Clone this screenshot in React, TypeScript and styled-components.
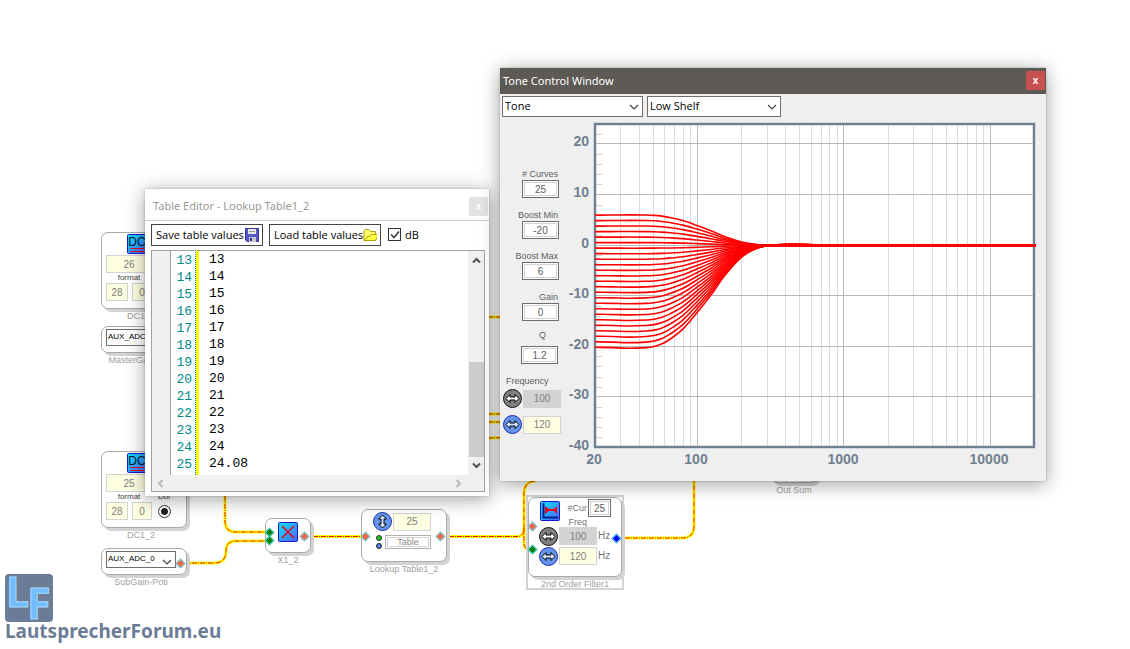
import React from "react";
import styled, { createGlobalStyle } from "styled-components";

const GlobalStyle = createGlobalStyle`
  * { box-sizing: border-box; }
  body { margin: 0; background: #fff; font-family: "Liberation Sans", Arial, sans-serif; }
  button, input, select, textarea { font: inherit; margin: 0; border-radius: 0; }
`;

const uiFont = `"Open Sans", "Noto Sans", sans-serif`;

/* ---------- canvas ---------- */

const Canvas = styled.main`
  position: relative;
  min-height: 100vh;
  overflow: hidden;
  background: #fff;
`;

const WireLayer = styled.svg`
  position: absolute;
  inset: 0;
  width: 100%;
  height: 100%;
`;

const Node = styled.section<{ $x: number; $y: number; $w: number }>`
  position: absolute;
  left: ${(p) => p.$x}px;
  top: ${(p) => p.$y}px;
  width: ${(p) => p.$w}px;
  font-size: 9px;
  color: #777;
`;

const NodeBody = styled.div<{ $h: number }>`
  position: relative;
  height: ${(p) => p.$h}px;
  border: 1px solid #a9a9a9;
  border-radius: 7px;
  background: #fff;
  box-shadow: 3px 3px 0 #d3d3d3;
`;

const NodeName = styled.h3<{ $source?: boolean }>`
  margin: 2px -20px 0;
  padding-right: ${(p) => (p.$source ? 6 : 0)}px;
  font-size: 9px;
  font-weight: 400;
  line-height: 11px;
  text-align: center;
  white-space: nowrap;
  color: #a0a0a0;
`;

const Selection = styled.div`
  position: absolute;
  left: 526px;
  top: 495px;
  width: 98px;
  height: 95px;
  border: 2px solid #d3d3d3;
`;

const Port = styled.i<{ $x: number; $y: number; $c: string }>`
  position: absolute;
  left: ${(p) => p.$x}px;
  top: ${(p) => p.$y}px;
  width: 7px;
  height: 7px;
  transform: rotate(45deg);
  background: ${(p) => p.$c};
  border: 1px solid #58d8e0;
`;

const Field = styled.input<{ $w: number; $tone?: "grey" | "cream" }>`
  display: block;
  width: ${(p) => p.$w}px;
  height: 18px;
  padding: 0;
  border: 1px solid #d3d3d3;
  background: ${(p) => (p.$tone === "grey" ? "#d3d3d3" : "#ffffe1")};
  color: #808080;
  font-size: 10px;
  text-align: center;
`;

const FramedField = styled.input<{ $w: number }>`
  display: block;
  width: ${(p) => p.$w}px;
  height: 18px;
  padding: 0;
  border: 1px solid #6e6e6e;
  background: #fff;
  box-shadow: inset 0 0 0 1px #fff, inset 0 0 0 2px #d3d3d3;
  color: #606060;
  font-size: 10px;
  text-align: center;
`;

const Row = styled.div<{ $gap?: number }>`
  display: flex;
  align-items: center;
  gap: ${(p) => p.$gap ?? 0}px;
`;

/* ---------- DC source ---------- */

const DcGrid = styled.div`
  display: grid;
  grid-template-columns: 22px 20px 16px;
  grid-template-rows: 21px 18px 10px 18px;
  column-gap: 4px;
  padding: 1px 0 0 4px;
  align-items: center;
`;
const IconCell = styled.div`
  grid-column: 1 / 3;
  height: 21px;
  padding-left: 21px;
`;
const WideCell = styled.div`
  grid-column: 1 / 4;
`;
const Caption = styled.span<{ $span?: number }>`
  grid-column: span ${(p) => p.$span ?? 1};
  font-size: 8px;
  line-height: 10px;
  text-align: center;
  color: #444;
`;
const Radio = styled.input`
  appearance: none;
  width: 13px;
  height: 13px;
  justify-self: center;
  border: 1px solid #333;
  border-radius: 50% !important;
  background: radial-gradient(circle, #222 0 3px, #fff 4px);
`;

function DcNode({ x, y, value, name }: { x: number; y: number; value: string; name: string }) {
  return (
    <Node $x={x} $y={y} $w={86}>
      <NodeBody $h={77}>
        <DcGrid>
          <IconCell>
            <svg width="20" height="20" aria-hidden="true">
              <TileGradient id={`dc-${name}`} />
              <rect x=".5" y=".5" width="19" height="19" rx="1" fill={`url(#dc-${name})`} stroke="#1818c8" />
              <text x="10" y="12" fontSize="12" textAnchor="middle" fill="#001030" fontFamily="Liberation Sans">DC</text>
              <path d="M3 14.500H17M3 17.500H17" stroke="#f00018" />
            </svg>
          </IconCell>
          <WideCell><Field $w={46} defaultValue={value} aria-label={`${name} value`} /></WideCell>
          <Caption $span={2}>format</Caption>
          <Caption>Dbl</Caption>
          <Field $w={22} defaultValue="28" aria-label={`${name} integer bits`} />
          <Field $w={20} defaultValue="0" aria-label={`${name} fraction bits`} />
          <Radio type="radio" defaultChecked aria-label={`${name} double`} />
        </DcGrid>
      </NodeBody>
      <NodeName $source>{name}</NodeName>
    </Node>
  );
}

function TileGradient({ id }: { id: string }) {
  return (
    <defs>
      <linearGradient id={id} x1="0" x2="1" y1="0" y2="1">
        <stop offset="0" stopColor="#10e8ff" />
        <stop offset=".5" stopColor="#28a8ff" />
        <stop offset="1" stopColor="#5060f8" />
      </linearGradient>
    </defs>
  );
}

/* ---------- drop-downs ---------- */

const SelectBox = styled.span<{ $w: number; $h: number; $small?: boolean }>`
  position: relative;
  display: block;
  width: ${(p) => p.$w}px;
  height: ${(p) => p.$h}px;
  svg { position: absolute; right: 4px; bottom: ${(p) => (p.$small ? 2 : 6)}px; pointer-events: none; }
`;
const SelectControl = styled.select<{ $small?: boolean }>`
  appearance: none;
  width: 100%;
  height: 100%;
  padding: ${(p) => (p.$small ? "0 0 3px 1px" : "0 0 2px 2px")};
  border: 1px solid #6e6e6e;
  background: #fff;
  color: #000;
  font-family: ${(p) => (p.$small ? `"Liberation Sans", sans-serif` : uiFont)};
  font-size: ${(p) => (p.$small ? 8 : 11)}px;
`;

function DropDown({ w, h, value, label, small }: { w: number; h: number; value: string; label: string; small?: boolean }) {
  return (
    <SelectBox $w={w} $h={h} $small={small}>
      <SelectControl $small={small} aria-label={label} defaultValue={value}>
        <option>{value}</option>
      </SelectControl>
      <svg width="10" height="8" aria-hidden="true"><path d="M1 2L5 6L9 2" fill="none" stroke="#444" strokeWidth="1.200" /></svg>
    </SelectBox>
  );
}

const PotiInner = styled.div`
  padding: 2px 4px;
`;

function PotiNode({ x, y, name }: { x: number; y: number; name: string }) {
  return (
    <Node $x={x} $y={y} $w={86}>
      <NodeBody $h={27}>
        <PotiInner><DropDown w={70} h={17} value="AUX_ADC_0" label={name} small /></PotiInner>
        <Port $x={75} $y={11} $c="#ff6347" />
      </NodeBody>
      <NodeName $source>{name}</NodeName>
    </Node>
  );
}

/* ---------- round arrow buttons ---------- */

const Round = styled.button<{ $blue?: boolean }>`
  display: block;
  flex: none;
  width: 19px;
  height: 19px;
  padding: 0;
  border: 1px solid ${(p) => (p.$blue ? "#1c2ca8" : "#111")};
  border-radius: 50%;
  background: ${(p) => (p.$blue ? "#6495ed" : "#808080")};
  svg { display: block; }
`;

function ArrowButton({ blue, vertical, label }: { blue?: boolean; vertical?: boolean; label: string }) {
  return (
    <Round $blue={blue} type="button" aria-label={label}>
      <svg width="17" height="17" aria-hidden="true">
        <path
          d="M2 8.500L6 4.500V7H11V4.500L15 8.500L11 12.500V10H6V12.500Z"
          fill={blue ? "#d8e4ff" : "#fff"}
          stroke="#000"
          transform={vertical ? "rotate(90 8.500 8.500)" : undefined}
        />
      </svg>
    </Round>
  );
}

/* ---------- other nodes ---------- */

const MultiplyInner = styled.div`
  padding: 3px 0 0 12px;
`;
const LookupInner = styled.div`
  display: flex;
  flex-direction: column;
  gap: 4px;
  padding: 2px 0 0 11px;
`;
const Lamps = styled.div`
  display: flex;
  flex-direction: column;
  align-items: flex-start;
  gap: 2px;
  width: 12px;
  padding-left: 3px;
`;
const Lamp = styled.i<{ $c: string }>`
  width: 6px;
  height: 6px;
  border: 1px solid #203020;
  border-radius: 50%;
  background: ${(p) => p.$c};
`;
const TableButton = styled.button`
  width: 46px;
  height: 14px;
  padding: 0;
  border: 1px solid #b0b0b0;
  background: #fff;
  box-shadow: inset 0 0 0 1px #fff, inset 0 0 0 2px #d3d3d3;
  color: #888;
  font-size: 9px;
  line-height: 12px;
`;
const FilterGrid = styled.div`
  display: grid;
  grid-template-columns: 20px 38px 14px;
  grid-template-rows: 28px 20px 19px;
  padding: 1px 0 0 10px;
  align-items: start;
`;
const FilterHead = styled.div`
  grid-column: 1 / 4;
  display: grid;
  grid-template-columns: 21px 26px 23px;
  grid-template-rows: 18px 10px;
  column-gap: 1px;
  align-items: center;
  text-align: right;
`;
const FreqText = styled.span`
  grid-column: 2;
  font-size: 9px;
  line-height: 10px;
`;
const TileSlot = styled.div`
  grid-row: 1 / 3;
  align-self: start;
  padding: 2px 0 0 1px;
  svg { display: block; }
`;
const Unit = styled.span`
  padding-left: 1px;
  font-size: 10px;
  line-height: 18px;
`;

/* ---------- wires ---------- */

const wires = [
  "M225 480V521Q225 532 236 532H270",
  "M184 563H214Q226 563 226 551Q226 541 236 541H270",
  "M305 536.500H366",
  "M441 536.500H518Q524 536 524 528V494Q524 481 536 481",
  "M524 528V544Q524 550 533 550",
  "M617 538H682Q694 538 694 526V470",
  "M480 317H505",
  "M480 414H505",
  "M480 422H505",
  "M480 439Q496 437 505 438",
];

/* ---------- floating windows ---------- */

const FloatingWindow = styled.section<{ $x: number; $y: number; $w: number; $h: number; $bg: string }>`
  position: absolute;
  left: ${(p) => p.$x}px;
  top: ${(p) => p.$y}px;
  width: ${(p) => p.$w}px;
  height: ${(p) => p.$h}px;
  display: flex;
  flex-direction: column;
  background: ${(p) => p.$bg};
  box-shadow: 0 3px 18px rgba(0, 0, 0, 0.38), 0 0 2px rgba(0, 0, 0, 0.25);
`;

const TitleBar = styled.header<{ $active?: boolean }>`
  flex: none;
  display: flex;
  align-items: center;
  justify-content: space-between;
  height: ${(p) => (p.$active ? 26 : 32)}px;
  padding: ${(p) => (p.$active ? "0 1px 1px 3px" : "3px 1px 0 8px")};
  border-bottom: ${(p) => (p.$active ? "0" : "1px solid #d0d0d0")};
  background: ${(p) => (p.$active ? "#5d5955" : "#fff")};
  color: ${(p) => (p.$active ? "#fff" : "#999")};
`;
const Title = styled.h2`
  margin: 0;
  font-family: "Noto Sans", "Open Sans", sans-serif;
  font-size: 11px;
  font-weight: 400;
  line-height: 18px;
`;
const CloseButton = styled.button<{ $active?: boolean }>`
  width: 19px;
  height: 19px;
  padding: 0;
  border: 0;
  background: ${(p) => (p.$active ? "#c75050" : "#e2e2e2")};
  color: #fff;
  font-size: 10px;
  font-weight: 700;
  line-height: 17px;
`;

/* ---------- table editor ---------- */

const EditorTools = styled.div`
  flex: none;
  display: flex;
  align-items: center;
  gap: 6px;
  height: 29px;
  padding: 0 6px 2px;
`;
const ToolButton = styled.button`
  display: flex;
  align-items: center;
  justify-content: space-between;
  width: 112px;
  height: 22px;
  padding: 0 3px 0 4px;
  border: 1px solid #444;
  background: #fff;
  color: #000;
  font-family: ${uiFont};
  font-size: 11px;
  white-space: nowrap;
`;
const CheckLabel = styled.label`
  display: flex;
  align-items: center;
  gap: 4px;
  position: relative;
  padding-left: 1px;
  font-family: ${uiFont};
  font-size: 11px;
  color: #000;
  svg { position: absolute; left: 3px; pointer-events: none; }
`;
const CheckInput = styled.input`
  appearance: none;
  width: 13px;
  height: 13px;
  border: 1px solid #333;
  background: #fff;
`;
const EditorFrame = styled.div`
  flex: 1;
  display: grid;
  grid-template-columns: 19px 28px 1fr 16px;
  grid-template-rows: 1fr 16px;
  margin: 0 4px 4px 6px;
  border: 1px solid #a0a0a0;
  min-height: 0;
`;
const Gutter = styled.div`
  background: #f0f0f0;
  border-right: 1px solid #a0a0a0;
`;
const LineNumbers = styled.ol`
  margin: 0;
  padding: 1px 4px 0 0;
  list-style: none;
  overflow: hidden;
  border-right: 3px solid #ff0;
  background: linear-gradient(#008080 50%, transparent 50%) right / 1px 2px repeat-y;
  color: #008b8b;
  font-family: "Liberation Mono", monospace;
  font-size: 13px;
  line-height: 17px;
  text-align: right;
`;
const Values = styled.textarea`
  width: 100%;
  height: 100%;
  padding: 0 0 0 10px;
  border: 0;
  outline: 0;
  resize: none;
  overflow: hidden;
  background: #fff;
  color: #000;
  font-family: "Liberation Mono", monospace !important;
  font-size: 13px !important;
  line-height: 17px !important;
`;
const ScrollV = styled.div`
  display: flex;
  flex-direction: column;
  align-items: center;
  background: #f0f0f0;
  padding: 5px 0 5px;
  svg { display: block; }
`;
const Thumb = styled.div`
  width: 15px;
  height: 95px;
  margin: auto 0 4px;
  background: #cdcdcd;
`;
const ScrollH = styled.div`
  grid-column: 1 / 5;
  display: flex;
  align-items: center;
  justify-content: space-between;
  padding: 0 21px 0 4px;
  background: #f0f0f0;
`;

const lines = Array.from({ length: 13 }, (_, i) => i + 13);
const tableText = lines.map((n) => (n === 25 ? "24.08" : String(n))).join("\n");

function Chevron({ d, color }: { d: string; color: string }) {
  return <svg width="9" height="9" aria-hidden="true"><path d={d} fill="none" stroke={color} strokeWidth="2" /></svg>;
}

function TableEditor() {
  return (
    <FloatingWindow $x={145} $y={189} $w={344} $h={307} $bg="#fff">
      <TitleBar>
        <Title>Table Editor - Lookup Table1_2</Title>
        <CloseButton aria-label="Close table editor">x</CloseButton>
      </TitleBar>
      <EditorTools>
        <ToolButton type="button">
          Save table values
          <svg width="14" height="14" aria-hidden="true">
            <path d="M.5.500H13.500V13.500H2L.5 12Z" fill="#5757c8" stroke="#38389a" />
            <path d="M3 1H11V6H3Z" fill="#e8e8e8" />
            <path d="M4 3.500H10" stroke="#999" />
            <path d="M4 9H11V14H4Z" fill="#c8c8d0" />
            <path d="M5 10H7V13H5Z" fill="#33338a" />
          </svg>
        </ToolButton>
        <ToolButton type="button">
          Load table values
          <svg width="16" height="14" aria-hidden="true">
            <path d="M1 12.500V3L2.500 1.500H6L7.500 3.500H12.500V6" fill="#ffff70" stroke="#aaa000" />
            <path d="M1 12.500L5 8L6.500 8.500L8 6.500H15.500L12.500 12.500Z" fill="#ffff40" stroke="#b0a000" />
          </svg>
        </ToolButton>
        <CheckLabel>
          <CheckInput type="checkbox" defaultChecked />
          <svg width="10" height="9" aria-hidden="true"><path d="M1 4.500L4 7.500L9 1.500" fill="none" stroke="#222" strokeWidth="1.300" /></svg>
          dB
        </CheckLabel>
      </EditorTools>
      <EditorFrame>
        <Gutter />
        <LineNumbers>{lines.map((n) => <li key={n}>{n}</li>)}</LineNumbers>
        <Values aria-label="Table values" defaultValue={tableText} spellCheck={false} />
        <ScrollV>
          <Chevron d="M1 6.500L4.500 3L8 6.500" color="#505050" />
          <Thumb />
          <Chevron d="M1 2.500L4.500 6L8 2.500" color="#505050" />
        </ScrollV>
        <ScrollH>
          <Chevron d="M6.500 1L3 4.500L6.500 8" color="#b8b8b8" />
          <Chevron d="M2.500 1L6 4.500L2.500 8" color="#b8b8b8" />
        </ScrollH>
      </EditorFrame>
    </FloatingWindow>
  );
}

/* ---------- tone control ---------- */

const ToneTools = styled.div`
  flex: none;
  display: flex;
  gap: 4px;
  padding: 2px 2px 1px;
`;
const ToneBody = styled.div`
  flex: 1;
  display: flex;
  min-height: 0;
`;
const Params = styled.div`
  flex: none;
  width: 66px;
  padding: 50px 0 0 3px;
`;
const ParamList = styled.div`
  display: flex;
  flex-direction: column;
  gap: 11px;
  padding-right: 7px;
`;
const Param = styled.label<{ $centered?: boolean }>`
  display: flex;
  flex-direction: column;
  align-items: flex-end;
  gap: ${(p) => (p.$centered ? 5 : 0)}px;
  margin-top: ${(p) => (p.$centered ? 8 : 0)}px;
  padding-right: ${(p) => (p.$centered ? 8 : 0)}px;
  color: #606060;
  font-size: 9px;
  line-height: 12px;
  span { padding-right: ${(p) => (p.$centered ? 12 : 1)}px; white-space: nowrap; }
`;
const FrequencyTitle = styled.h3`
  margin: 11px 0 2px 3px;
  color: #606060;
  font-size: 9px;
  font-weight: 400;
  line-height: 12px;
`;
const FrequencyRows = styled.div`
  display: flex;
  flex-direction: column;
  gap: 7px;
`;
const Chart = styled.svg`
  flex: none;
  display: block;
  font: bold 14px "Liberation Sans", Arial, sans-serif;
  fill: #708090;
`;

const left = 29;
const right = 468;
const top = 6;
const bottom = 329;
const freqX = (f: number) => left + Math.log10(f / 20) * 146.5;
const dbY = (db: number) => 127.5 - db * 5.06;

const minorFreqs = [30, 40, 50, 60, 70, 80, 90].concat(
  ...[100, 1000].map((d) => [2, 3, 4, 5, 6, 7, 8, 9].map((m) => m * d)),
);
const minorDbs = Array.from({ length: 31 }, (_, i) => 22 - i * 2).filter((d) => d % 10 !== 0);

/* share of the shelf gain left at each x position of the plot */
const response: [number, number][] = [
  [29, 1], [46, 1.004], [64, 1.01], [80, 1.004], [88, 0.993], [96, 0.967], [104, 0.922], [117, 0.82], [131, 0.66],
  [145, 0.487], [158, 0.305], [175, 0.12], [187, 0.045], [201, 0.002], [224, -0.013], [260, -0.004], [300, 0], [470, 0],
];

function curve(gain: number) {
  const p = response.map(([x, s]) => [x, dbY(gain * s)]);
  const slope = (i: number) => {
    const a = p[Math.max(0, i - 1)];
    const b = p[Math.min(p.length - 1, i + 1)];
    return (b[1] - a[1]) / (b[0] - a[0]);
  };
  let d = `M${p[0][0]} ${p[0][1]}`;
  for (let i = 1; i < p.length; i++) {
    const dx = (p[i][0] - p[i - 1][0]) / 3;
    d += `C${p[i - 1][0] + dx} ${p[i - 1][1] + dx * slope(i - 1)} ${p[i][0] - dx} ${p[i][1] - dx * slope(i)} ${p[i][0]} ${p[i][1]}`;
  }
  return d;
}

const gains = Array.from({ length: 25 }, (_, i) => 6 - (i * 26.1) / 24);

function ToneChart() {
  const snap = (v: number) => Math.floor(v) + 0.5;
  return (
    <Chart width="480" height="360" role="img" aria-label="Low shelf response curves">
      <rect x={left} y={top} width={right - left} height={bottom - top} fill="#fff" />
      <path d={minorFreqs.map((f) => `M${snap(freqX(f))} ${top}V${bottom}`).join("")} stroke="#dcdcdc" />
      <path d={minorDbs.map((d) => `M${left} ${snap(dbY(d))}h7`).join("")} stroke="#d3d3d3" />
      <path
        d={[100, 1000, 10000].map((f) => `M${snap(freqX(f))} ${top}V${bottom}`).join("") +
          [20, 10, 0, -10, -20, -30].map((d) => `M${left} ${snap(dbY(d) - 0.5)}H${right}`).join("")}
        stroke="#b8b8b8"
      />
      <rect x={left} y={top} width={right - left} height={bottom - top} fill="none" stroke="#b9c4cf" strokeWidth="3" />
      <rect x={left} y={top} width={right - left} height={bottom - top} fill="none" stroke="#708090" strokeWidth="2" />
      <g fill="none" stroke="#f00" strokeWidth="1.600">
        {gains.map((g) => <path key={g} d={curve(g)} />)}
        <path d={`M205 127.500H470`} strokeWidth="3" />
      </g>
      <g textAnchor="end">
        {[20, 10, 0, -10, -20, -30, -40].map((d) => <text key={d} x="23" y={Math.round(dbY(d)) + 2}>{d}</text>)}
      </g>
      <g textAnchor="middle">
        {[20, 100, 1000, 10000].map((f) => <text key={f} x={Math.floor(freqX(f) - 0.5)} y="346">{f}</text>)}
      </g>
    </Chart>
  );
}

function ToneWindow() {
  const params = [["# Curves", "25"], ["Boost Min", "-20"], ["Boost Max", "6"], ["Gain", "0"]];
  return (
    <FloatingWindow $x={500} $y={68} $w={546} $h={413} $bg="#efefef">
      <TitleBar $active>
        <Title>Tone Control Window</Title>
        <CloseButton $active aria-label="Close tone control">x</CloseButton>
      </TitleBar>
      <ToneTools>
        <DropDown w={141} h={21} value="Tone" label="Mode" />
        <DropDown w={134} h={21} value="Low Shelf" label="Filter type" />
      </ToneTools>
      <ToneBody>
        <Params>
          <ParamList>
            {params.map(([name, value]) => (
              <Param key={name}><span>{name}</span><FramedField $w={37} defaultValue={value} /></Param>
            ))}
          </ParamList>
          <Param $centered><span>Q</span><FramedField $w={37} defaultValue="1.2" /></Param>
          <FrequencyTitle>Frequency</FrequencyTitle>
          <FrequencyRows>
            <Row $gap={1}><ArrowButton label="Adjust lower frequency" /><Field $w={38} $tone="grey" defaultValue="100" aria-label="Lower frequency" /></Row>
            <Row $gap={1}><ArrowButton blue label="Adjust upper frequency" /><Field $w={38} defaultValue="120" aria-label="Upper frequency" /></Row>
          </FrequencyRows>
        </Params>
        <ToneChart />
      </ToneBody>
    </FloatingWindow>
  );
}

/* ---------- brand ---------- */

const Brand = styled.a`
  position: absolute;
  left: 5px;
  top: 574px;
  color: #6b7d96;
  text-decoration: none;
  svg { display: block; overflow: visible; }
`;
const BrandName = styled.span`
  display: block;
  margin-top: -4px;
  font-family: "Noto Sans", "Open Sans", sans-serif;
  font-size: 19px;
  font-weight: 700;
  line-height: 26px;
`;

export default function App() {
  return (
    <Canvas>
      <GlobalStyle />
      <WireLayer aria-hidden="true">
        <g fill="none">
          {wires.map((d) => <path key={d} d={d} stroke="#ffff00" strokeWidth="3" />)}
          {wires.map((d) => <path key={d} d={d} stroke="#e81800" strokeWidth="1" strokeDasharray="5 1 1 1" />)}
        </g>
      </WireLayer>

      <DcNode x={101} y={232} value="26" name="DC1_1" />
      <PotiNode x={101} y={326} name="MasterGain-Poti" />
      <DcNode x={101} y={451} value="25" name="DC1_2" />
      <PotiNode x={101} y={548} name="SubGain-Poti" />

      <Node $x={265} $y={518} $w={46}>
        <NodeBody $h={35}>
          <MultiplyInner>
            <svg width="20" height="20" aria-hidden="true">
              <TileGradient id="mul" />
              <rect x=".5" y=".5" width="19" height="19" rx="1" fill="url(#mul)" stroke="#1818c8" />
              <path d="M4 4L16 16M16 4L4 16" stroke="#f00018" strokeWidth="1.500" />
            </svg>
          </MultiplyInner>
          <Port $x={0} $y={10} $c="#008000" />
          <Port $x={0} $y={18} $c="#008000" />
          <Port $x={35} $y={14} $c="#ff6347" />
        </NodeBody>
        <NodeName>X1_2</NodeName>
      </Node>

      <Node $x={361} $y={509} $w={86}>
        <NodeBody $h={53}>
          <LookupInner>
            <Row $gap={1}>
              <ArrowButton blue vertical label="Adjust table size" />
              <Field $w={38} defaultValue="25" aria-label="Table size" />
            </Row>
            <Row>
              <Lamps><Lamp $c="#20c020" /><Lamp $c="#6078f0" /></Lamps>
              <TableButton type="button">Table</TableButton>
            </Row>
          </LookupInner>
          <Port $x={0} $y={23} $c="#ff6347" />
          <Port $x={75} $y={23} $c="#ff6347" />
        </NodeBody>
        <NodeName>Lookup Table1_2</NodeName>
      </Node>

      <Selection />
      <Node $x={528} $y={497} $w={94}>
        <NodeBody $h={80}>
          <FilterGrid>
            <FilterHead>
              <TileSlot>
                <svg width="20" height="20" aria-hidden="true">
                  <TileGradient id="shelf" />
                  <rect x=".5" y=".5" width="19" height="19" rx="1" fill="url(#shelf)" stroke="#1818c8" />
                  <path d="M3.500 2V16.500H18" fill="none" stroke="#001890" strokeWidth="2" />
                  <path d="M5 5L9 8H14L17 5V13L14 10H9L5 13Z" fill="#f00018" />
                </svg>
              </TileSlot>
              <label htmlFor="curve-count">#Cur</label>
              <FramedField id="curve-count" $w={23} defaultValue="25" />
              <FreqText>Freq</FreqText>
            </FilterHead>
            <ArrowButton label="Adjust first frequency" />
            <Field $w={38} $tone="grey" defaultValue="100" aria-label="First frequency" />
            <Unit>Hz</Unit>
            <ArrowButton blue label="Adjust second frequency" />
            <Field $w={38} defaultValue="120" aria-label="Second frequency" />
            <Unit>Hz</Unit>
          </FilterGrid>
          <Port $x={0} $y={25} $c="#ff6347" />
          <Port $x={0} $y={48} $c="#008000" />
          <Port $x={84} $y={37} $c="#0000ff" />
        </NodeBody>
        <NodeName>2nd Order Filter1</NodeName>
      </Node>

      <Node $x={771} $y={448} $w={46}>
        <NodeBody $h={35} />
        <NodeName>Out Sum</NodeName>
      </Node>

      <TableEditor />
      <ToneWindow />

      <Brand href="#">
        <svg width="48" height="48" aria-hidden="true">
          <rect width="48" height="48" rx="4" fill="#6b7d96" />
          <g fill="#73bdff" stroke="#a8d8ff" strokeWidth="1" fontFamily="Open Sans" fontWeight="700">
            <text x="1" y="33" fontSize="41">L</text>
            <text x="22" y="45" fontSize="43">F</text>
          </g>
        </svg>
        <BrandName>LautsprecherForum.eu</BrandName>
      </Brand>
    </Canvas>
  );
}
